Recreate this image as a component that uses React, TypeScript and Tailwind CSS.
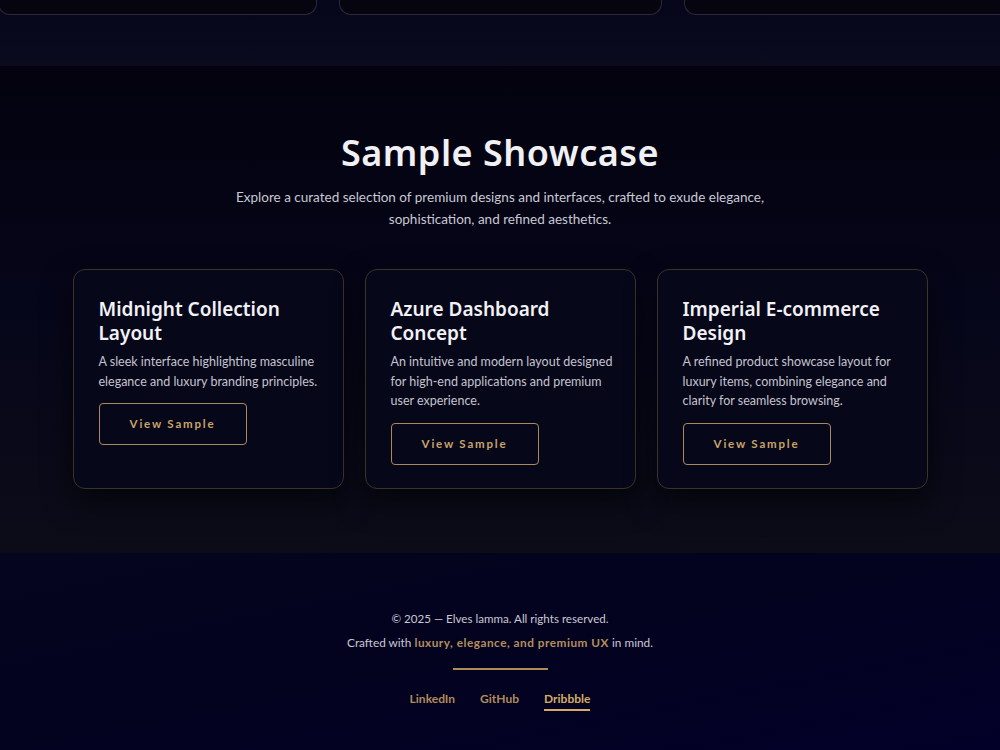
import React from "react";

const cards = [
  {
    title: "Midnight Collection Layout",
    desc: "A sleek interface highlighting masculine elegance and luxury branding principles.",
  },
  {
    title: "Azure Dashboard Concept",
    desc: "An intuitive and modern layout designed for high-end applications and premium user experience.",
  },
  {
    title: "Imperial E-commerce Design",
    desc: "A refined product showcase layout for luxury items, combining elegance and clarity for seamless browsing.",
  },
];

const heading = { fontFamily: '"Noto Sans", "Open Sans", sans-serif' };

export default function App() {
  return (
    <div
      className="w-[1000px] h-[750px] overflow-hidden bg-[#03020f] text-white"
      style={{ fontFamily: 'Lato, "Noto Sans", sans-serif' }}
    >
      {/* top section remnant */}
      <div className="h-[66px] bg-gradient-to-b from-[#06061a] to-[#0a0b1d]">
        <div className="flex gap-[22px] -mx-[2px] h-[15px]">
          <div className="w-[319px] h-full rounded-b-[12px] border border-t-0 border-[#2a2a3a] bg-[#05040f]" />
          <div className="w-[323px] h-full rounded-b-[12px] border border-t-0 border-[#2a2a3a] bg-[#05040f]" />
          <div className="flex-1 h-full rounded-bl-[12px] border border-t-0 border-r-0 border-[#2a2a3a] bg-[#05040f]" />
        </div>
      </div>

      {/* showcase section */}
      <section className="h-[487px] bg-gradient-to-b from-[#03020e] via-[#06061a] to-[#0c0c18] pt-[65px]">
        <h2
          className="text-center text-[36px] leading-[44px] font-semibold tracking-[0.5px] text-[#f1f1f5]"
          style={heading}
        >
          Sample Showcase
        </h2>
        <p className="mx-auto mt-[11px] w-[620px] text-center text-[13.5px] leading-[22px] text-[#c9c9d4]">
          Explore a curated selection of premium designs and interfaces, crafted to exude elegance,
          <br />
          sophistication, and refined aesthetics.
        </p>
        <div className="mt-[39px] flex justify-center gap-[21px]">
          {cards.map((c) => (
            <div
              key={c.title}
              className="w-[271px] h-[220px] rounded-[12px] border border-[#3a3328] bg-[#07071a] pl-[25px] pr-[18px] pt-[27px] shadow-[0_12px_30px_rgba(0,0,0,0.6)]"
            >
              <h3
                className="text-[19px] leading-[24px] font-semibold text-[#f2f2f6]"
                style={heading}
              >
                {c.title}
              </h3>
              <p className="mt-[7px] text-[12.5px] leading-[19.5px] text-[#c4c4ce]">{c.desc}</p>
              <button className="mt-[12px] w-[148px] h-[42px] rounded-[4px] border border-[#a88a5c] text-[11.5px] font-bold tracking-[1.8px] text-[#c9a46a]">
                View Sample
              </button>
            </div>
          ))}
        </div>
      </section>

      {/* footer */}
      <footer className="h-[197px] bg-gradient-to-br from-[#05051e] via-[#03021f] to-[#020028] pt-[57px] flex flex-col items-center">
        <p className="text-[11.6px] leading-[18px] text-[#c9c9d4]">
          © 2025 — Elves lamma. All rights reserved.
        </p>
        <p className="mt-[6px] text-[11.8px] leading-[18px] text-[#c9c9d4]">
          Crafted with{" "}
          <span className="font-bold tracking-[0.5px] text-[#b48f5e]">
            luxury, elegance, and premium UX
          </span>{" "}
          in mind.
        </p>
        <div className="mt-[16px] w-[95px] h-[2px] bg-[#b08c55]" />
        <div className="mt-[20px] flex gap-[25px] text-[12px] font-bold">
          <a className="text-[#b08c5a]">LinkedIn</a>
          <a className="text-[#b08c5a]">GitHub</a>
          <a className="text-[#d4ad62] border-b-2 border-[#d4ad62] pb-[1px]">Dribbble</a>
        </div>
      </footer>
    </div>
  );
}
